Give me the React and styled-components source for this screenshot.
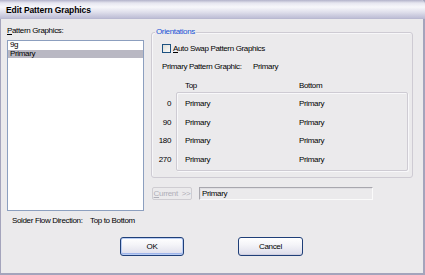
import React from 'react';
import styled, { createGlobalStyle } from 'styled-components';

const GlobalStyle = createGlobalStyle`
  html, body {
    margin: 0;
    padding: 0;
    background: #ebeaec;
  }
  body {
    font-family: "Liberation Sans", Arial, sans-serif;
  }
`;

const Window = styled.div`
  width: 425px;
  height: 275px;
  box-sizing: border-box;
  background: #ebeaec;
  box-shadow: inset 1px 0 0 #a4a4bc, inset -2px -2px 0 #a4a4bc;
  display: flex;
  flex-direction: column;
  font-family: "Liberation Sans", Arial, sans-serif;
  font-size: 8px;
  letter-spacing: -0.35px;
  color: #000;
`;

const TitleBar = styled.div`
  height: 19px;
  flex: none;
  display: flex;
  align-items: center;
  padding-left: 6px;
  border-radius: 0 4px 0 0;
  background: linear-gradient(
    to bottom,
    #b2b2ca 0,
    #e6e6f0 3px,
    #f7f7fb 7px,
    #e0e0ec 12px,
    #bebed6 18px,
    #b4b4cc 19px
  );
  font-weight: bold;
  font-size: 8.5px;
  letter-spacing: -0.1px;
`;

const Main = styled.div`
  display: grid;
  grid-template-columns: 137px 262px;
  column-gap: 7px;
  margin-left: 7px;
  align-items: start;
`;

const LeftCol = styled.div`
  padding-top: 6px;
  display: flex;
  flex-direction: column;
`;

const Label = styled.div`
  line-height: 12px;
  height: 12px;
  white-space: nowrap;
`;

const Key = styled.span`
  text-decoration: underline;
  text-underline-offset: 1px;
`;

const ListBox = styled.div`
  margin-top: 3px;
  height: 171px;
  box-sizing: border-box;
  border: 1px solid #8c9fbf;
  background: #fff;
`;

const ListItem = styled.div`
  height: 8.5px;
  line-height: 8.5px;
  padding-left: 2px;
  background: ${(p) => (p.$selected ? '#b9b8c3' : 'transparent')};
`;

const RightCol = styled.div`
  display: flex;
  flex-direction: column;
`;

const GroupBox = styled.div`
  position: relative;
  margin-top: 13px;
  height: 146px;
  box-sizing: border-box;
  border: 1px solid #cecbd3;
  border-radius: 3px;
  box-shadow: inset 1px 1px 0 #f7f7f9;
  padding: 9px 4px 0 0;
`;

const Legend = styled.span`
  position: absolute;
  top: -7px;
  left: 3px;
  padding: 0 1px;
  line-height: 12px;
  background: #ebeaec;
  color: #2153d6;
`;

const CheckRow = styled.label`
  display: flex;
  align-items: center;
  height: 12px;
  padding-left: 10px;
  gap: 2px;
`;

const CheckBox = styled.span`
  width: 9px;
  height: 9px;
  box-sizing: border-box;
  border: 1px solid #1c5180;
  background: linear-gradient(135deg, #dcdcd7, #fbfbf9);
`;

const InfoRow = styled.div`
  display: grid;
  grid-template-columns: ${(p) => p.$first}px auto;
  margin-top: 7px;
  padding-left: ${(p) => p.$indent}px;
  line-height: 12px;
  height: 12px;
`;

const Orient = styled.div`
  display: grid;
  grid-template-columns: 19px 232px;
  column-gap: 5px;
`;

const Angles = styled.div`
  padding-top: 3px;
  text-align: right;
`;

const Cell = styled.div`
  height: 18.67px;
  line-height: 18.67px;
`;

const OrientBox = styled.div`
  height: 79px;
  box-sizing: border-box;
  border: 1px solid #cecbd3;
  border-radius: 2px;
  box-shadow: inset 1px 1px 0 #f8f8fa, 1px 1px 0 #f8f8fa;
  padding: 2px 0 0 8px;
`;

const OrientRow = styled.div`
  display: grid;
  grid-template-columns: 114px auto;
`;

const CurrentRow = styled.div`
  display: flex;
  margin-top: 9px;
  margin-left: 1px;
  gap: 7px;
  height: 13px;
`;

const SmallButton = styled.button`
  width: 40px;
  height: 13px;
  padding: 0;
  box-sizing: border-box;
  border: 1px solid #cfcdd2;
  border-radius: 2px;
  background: #ebeaec;
  font: inherit;
  letter-spacing: inherit;
  color: ${(p) => (p.disabled ? '#b0afb8' : '#000')};
  line-height: 11px;
  word-spacing: 2px;
`;

const Field = styled.div`
  width: 174px;
  height: 13px;
  box-sizing: border-box;
  border-top: 1px solid #a8a7ae;
  border-left: 1px solid #a8a7ae;
  border-right: 1px solid #fafafa;
  border-bottom: 1px solid #fafafa;
  box-shadow: inset 1px 1px 0 #e0dfe3;
  padding-left: 2px;
  line-height: 11px;
`;

const SolderRow = styled.div`
  display: grid;
  grid-template-columns: 78px auto;
  margin-top: 4px;
  padding-left: 12px;
  line-height: 12px;
`;

const Buttons = styled.div`
  display: flex;
  justify-content: center;
  gap: 54px;
  margin-top: 10px;
  padding-right: 2px;
`;

const PushButton = styled.button`
  width: ${(p) => p.$w}px;
  height: 19px;
  padding: 0;
  box-sizing: border-box;
  border: 1px solid #1f3f78;
  border-radius: 3px;
  background: linear-gradient(to bottom, #ffffff 0, #f4f4f8 40%, #dcdcea 100%);
  box-shadow: ${(p) =>
    p.$default ? 'inset 0 0 0 1px #b9cdf4, inset 0 -1px 0 1px #9eb4ea' : 'inset 0 -1px 0 #cfcfe0'};
  font: inherit;
  letter-spacing: inherit;
  color: #000;
`;

const angles = ['0', '90', '180', '270'];

export default function App() {
  return (
    <>
      <GlobalStyle />
      <Window>
        <TitleBar>Edit Pattern Graphics</TitleBar>
        <Main>
          <LeftCol>
            <Label>
              <Key>P</Key>attern Graphics:
            </Label>
            <ListBox>
              <ListItem>9g</ListItem>
              <ListItem $selected>Primary</ListItem>
            </ListBox>
          </LeftCol>
          <RightCol>
            <GroupBox>
              <Legend>Orientations</Legend>
              <CheckRow>
                <CheckBox />
                <span>
                  <Key>A</Key>uto Swap Pattern Graphics
                </span>
              </CheckRow>
              <InfoRow $first={91} $indent={10}>
                <span>Primary Pattern Graphic:</span>
                <span>Primary</span>
              </InfoRow>
              <InfoRow $first={114} $indent={33}>
                <span>Top</span>
                <span>Bottom</span>
              </InfoRow>
              <Orient>
                <Angles>
                  {angles.map((a) => (
                    <Cell key={a}>{a}</Cell>
                  ))}
                </Angles>
                <OrientBox>
                  {angles.map((a) => (
                    <OrientRow key={a}>
                      <Cell>Primary</Cell>
                      <Cell>Primary</Cell>
                    </OrientRow>
                  ))}
                </OrientBox>
              </Orient>
            </GroupBox>
            <CurrentRow>
              <SmallButton disabled>
                <Key>C</Key>urrent &gt;&gt;
              </SmallButton>
              <Field>Primary</Field>
            </CurrentRow>
          </RightCol>
        </Main>
        <SolderRow>
          <span>Solder Flow Direction:</span>
          <span>Top to Bottom</span>
        </SolderRow>
        <Buttons>
          <PushButton $w={64} $default>
            OK
          </PushButton>
          <PushButton $w={65}>Cancel</PushButton>
        </Buttons>
      </Window>
    </>
  );
}
